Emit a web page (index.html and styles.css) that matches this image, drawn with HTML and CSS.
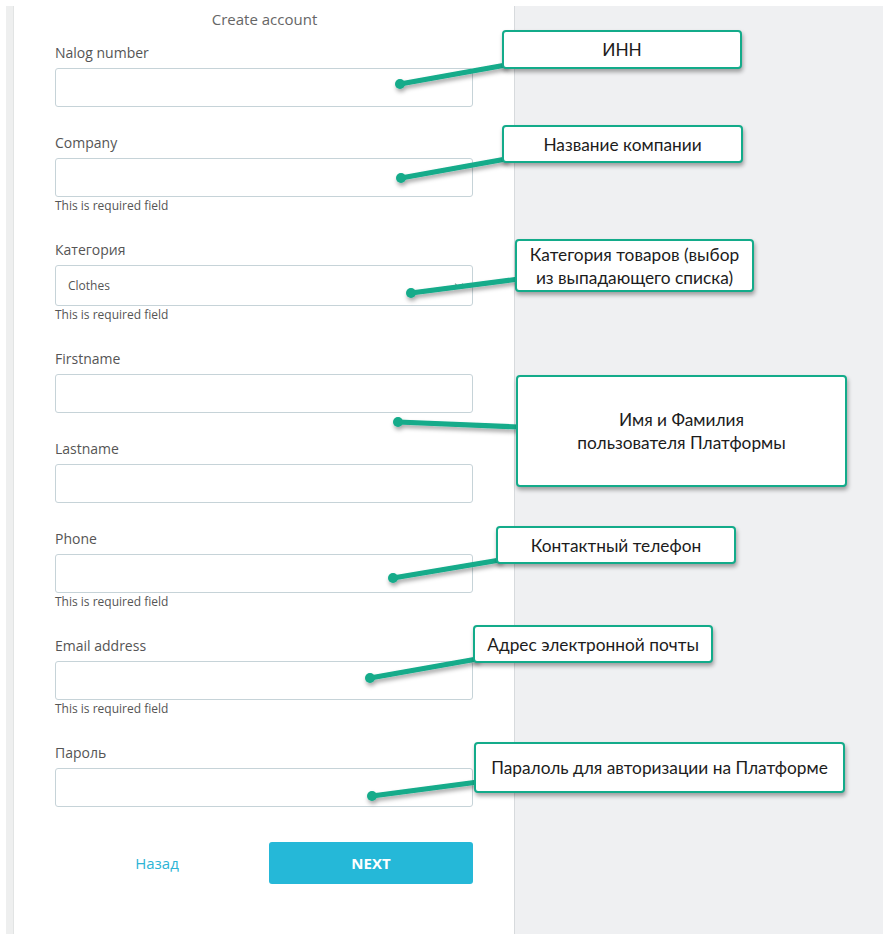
FILE: index.html
```html
<!DOCTYPE html>
<html lang="ru">
<head>
<meta charset="utf-8">
<title>Create account</title>
<link rel="stylesheet" href="styles.css">
</head>
<body>
<div class="page">
  <div class="strip"></div>
  <main class="panel">
    <h1 class="title">Create account</h1>
    <form class="form">
      <div class="field">
        <label class="label">Nalog number</label>
        <div class="input"></div>
      </div>
      <div class="field">
        <label class="label">Company</label>
        <div class="input"></div>
        <div class="error">This is required field</div>
      </div>
      <div class="field">
        <label class="label">Категория</label>
        <div class="input select"><span class="value">Clothes</span><span class="arrow"></span></div>
        <div class="error">This is required field</div>
      </div>
      <div class="field">
        <label class="label">Firstname</label>
        <div class="input"></div>
      </div>
      <div class="field">
        <label class="label">Lastname</label>
        <div class="input"></div>
      </div>
      <div class="field">
        <label class="label">Phone</label>
        <div class="input"></div>
        <div class="error">This is required field</div>
      </div>
      <div class="field">
        <label class="label">Email address</label>
        <div class="input"></div>
        <div class="error">This is required field</div>
      </div>
      <div class="field">
        <label class="label">Пароль</label>
        <div class="input"></div>
      </div>
      <div class="actions">
        <a class="back">Назад</a>
        <button type="button" class="next">NEXT</button>
      </div>
    </form>
  </main>
  <aside class="side"></aside>

  <svg class="connectors" width="883" height="934" viewBox="0 0 883 934">
    <defs>
      <filter id="sh" x="-10%" y="-50%" width="130%" height="250%">
        <feDropShadow dx="1" dy="3" stdDeviation="2" flood-color="#000" flood-opacity="0.35"/>
      </filter>
    </defs>
    <g filter="url(#sh)" stroke="#13ab8a" stroke-width="5" stroke-linecap="round" fill="#13ab8a">
      <line x1="400" y1="84" x2="506" y2="65"/><circle cx="400" cy="84" r="5" stroke="none"/>
      <line x1="401" y1="178" x2="506" y2="159"/><circle cx="401" cy="178" r="5" stroke="none"/>
      <line x1="411" y1="293" x2="519" y2="279"/><circle cx="411" cy="293" r="5" stroke="none"/>
      <line x1="398" y1="422" x2="519" y2="427"/><circle cx="398" cy="422" r="5" stroke="none"/>
      <line x1="393" y1="578" x2="500" y2="560"/><circle cx="393" cy="578" r="5" stroke="none"/>
      <line x1="370" y1="678" x2="477" y2="659"/><circle cx="370" cy="678" r="5" stroke="none"/>
      <line x1="372" y1="796" x2="478" y2="782"/><circle cx="372" cy="796" r="5" stroke="none"/>
    </g>
  </svg>

  <div class="callout c1">ИНН</div>
  <div class="callout c2">Название компании</div>
  <div class="callout c3">Категория товаров (выбор<br>из выпадающего списка)</div>
  <div class="callout c4"><span class="pad">Имя и Фамилия</span>пользователя Платформы</div>
  <div class="callout c5">Контактный телефон</div>
  <div class="callout c6">Адрес электронной почты</div>
  <div class="callout c7">Паралоль для авторизации на Платформе</div>
</div>
</body>
</html>
```

FILE: styles.css
```css
* { box-sizing: border-box; }
html, body { margin: 0; padding: 0; background: #fff; }
body {
  font-family: "Open Sans", "Liberation Sans", sans-serif;
  width: 883px;
  height: 934px;
  overflow: hidden;
}
.page {
  position: relative;
  display: flex;
  width: 883px;
  height: 934px;
  padding: 6px 0 0 6px;
}
.strip {
  width: 8px;
  background: #eeefef;
  border-right: 1px solid #e2e4e4;
}
.panel {
  width: 501px;
  background: #fff;
  border-right: 1px solid #d7dadd;
  padding: 0 41px 0 41px;
}
.side {
  flex: 1;
  background: #eff0f2;
}
.title {
  margin: 3px 0 0;
  font-size: 15px;
  font-weight: 400;
  line-height: 20px;
  color: #666;
  text-align: center;
  padding-left: 1px;
}
.form {
  display: flex;
  flex-direction: column;
  padding-top: 14px;
}
.field {
  display: flex;
  flex-direction: column;
  margin-bottom: 26px;
}
.label {
  font-size: 14px;
  line-height: 20px;
  color: #555;
  margin-bottom: 5px;
}
.input {
  height: 39px;
  border: 1px solid #c6d3d8;
  border-radius: 3px;
  background: #fff;
}
.select {
  height: 41px;
  display: flex;
  align-items: center;
  justify-content: space-between;
  padding: 0 10px 0 12px;
}
.select .value {
  font-size: 12px;
  color: #555;
}
.select .arrow {
  width: 6px;
  height: 6px;
  border-right: 1px solid #888;
  border-bottom: 1px solid #888;
  transform: rotate(45deg);
  margin-top: -3px;
}
.error {
  margin-top: 1px;
  font-size: 12px;
  line-height: 16px;
  color: #555;
}
.actions {
  display: grid;
  grid-template-columns: 1fr 1fr;
  column-gap: 10px;
  align-items: center;
  margin-top: 9px;
}
.back {
  text-align: center;
  font-size: 15px;
  color: #2cb4d5;
}
.next {
  height: 42px;
  border: none;
  border-radius: 3px;
  background: #25b8d8;
  color: #fff;
  font-family: "Open Sans", "Liberation Sans", sans-serif;
  font-size: 15px;
  font-weight: 700;
}
.connectors {
  position: absolute;
  left: 0;
  top: 0;
  pointer-events: none;
}
.callout {
  position: absolute;
  display: flex;
  flex-direction: column;
  align-items: center;
  justify-content: center;
  text-align: center;
  background: #fff;
  border: 2px solid #13ab8a;
  border-radius: 4px;
  box-shadow: 1px 3px 4px rgba(0, 0, 0, 0.35);
  font-family: Lato, "Open Sans", sans-serif;
  font-size: 17.3px;
  line-height: 23px;
  color: #1c1c1c;
}
.callout .pad { padding-left: 0; }
.c1 { left: 502px; top: 30px; width: 240px; height: 39px; }
.c2 { left: 502px; top: 125px; width: 241px; height: 38px; }
.c3 { left: 515px; top: 239px; width: 239px; height: 53px; }
.c4 { left: 516px; top: 375px; width: 331px; height: 112px; }
.c5 { left: 496px; top: 526px; width: 240px; height: 38px; }
.c6 { left: 473px; top: 625px; width: 240px; height: 38px; }
.c7 { left: 474px; top: 742px; width: 371px; height: 51px; }
```
